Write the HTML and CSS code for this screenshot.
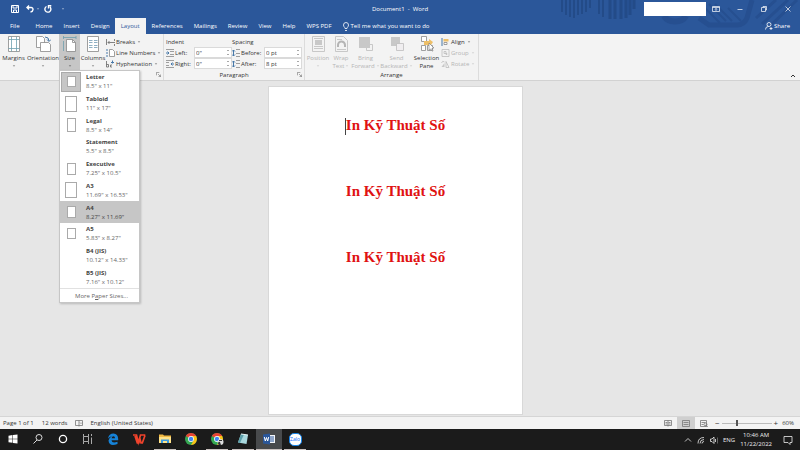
FILE: index.html
```html
<!DOCTYPE html>
<html lang="en">
<head>
<meta charset="utf-8">
<meta name="viewport" content="width=device-width, initial-scale=1">
<title>Document1 - Word</title>
<link rel="stylesheet" href="styles.css">
</head>
<body>
<header class="header">
  <svg class="header-art" viewBox="0 0 240 34" aria-hidden="true">
    <g stroke="#234b88" stroke-width="2">
      <path d="M2 0v12M6 0v15M10 0v17M14 0v18M18 0v15M22 0v14M26 0v12M30 0v8M39 0v14M43 0v17"/>
      <path d="M50 0v19M55 0v19M61 0v19M66 0v18M70 0v15M74 0v9" stroke-width="3"/>
    </g>
    <path d="M104 16a12 9 0 0 0 22 0" fill="none" stroke="#264f90" stroke-width="6"/>
    <path d="M139 18l10 7h28q7 0 10-7l5-18" fill="none" stroke="#264f90" stroke-width="5"/>
    <path d="M143 6l17 17M149 4l17 17M155 4l17 17M168 8l13 13" stroke="#264f90" stroke-width="2"/>
    <path d="M202 24l26-24M208 28l29-28M196 18l20-18" stroke="#264f90" stroke-width="3"/>
  </svg>
  <div class="titlebar">
    <div class="quick">
      <button aria-label="Save"><svg viewBox="0 0 8 8"><path d="M.5.5h7v7h-7zM2 1v2h4V1M2.500 7.500V5h3v2.500" /></svg></button>
      <button aria-label="Undo"><svg viewBox="0 0 8 8"><path class="bold" d="M3 .5L1 2.500 3 4.500M1 2.500h4c3 0 2.500 4-.5 4.500"/></svg></button>
      <i class="caret"></i>
      <button aria-label="Redo"><svg viewBox="0 0 8 8"><path class="bold" d="M6 2a3 3 0 1 1-3.500-.5M4.500 3.500V.700h2.800"/></svg></button>
      <i class="caret"></i>
    </div>
    <h1 class="title">Document1&nbsp; -&nbsp; Word</h1>
    <div class="window">
      <span class="account"></span>
      <button aria-label="Ribbon display options"><svg viewBox="0 0 8 8"><path d="M.5 1.500h7v5h-7zM.5 2.500h7M4 6V3.500M3 4.500l1-1 1 1"/></svg></button>
      <button aria-label="Minimize"><svg viewBox="0 0 8 8"><path d="M1.500 4.500h5"/></svg></button>
      <button aria-label="Restore"><svg viewBox="0 0 8 8"><path d="M1.500 2.500h4v4h-4zM3 2.500v-1h3.500V5h-1"/></svg></button>
      <button aria-label="Close"><svg viewBox="0 0 8 8"><path d="M1.500 1.500l5 5M6.500 1.500l-5 5"/></svg></button>
    </div>
  </div>
  <nav class="tabs">
    <a class="file" href="#">File</a><a href="#">Home</a><a href="#">Insert</a><a href="#">Design</a><a class="active" href="#">Layout</a><a href="#">References</a><a href="#">Mailings</a><a href="#">Review</a><a href="#">View</a><a href="#">Help</a><a href="#">WPS PDF</a>
    <a class="tell" href="#"><svg viewBox="0 0 8 9"><path d="M3 6.500C3 5 1.500 5 1.500 3a2.500 2.500 0 0 1 5 0C6.500 5 5 5 5 6.500zM3 8.500h2"/></svg>Tell me what you want to do</a>
    <a class="share" href="#"><svg viewBox="0 0 8 8"><circle cx="4" cy="2.500" r="2"/><path d="M.5 7.500q0-3 3-3M4.500 6.500h3M6 5v3"/></svg>Share</a>
  </nav>
</header>

<section class="ribbon" aria-label="Layout ribbon">
  <div class="group setup" role="group">
    <div class="tools">
      <button class="big margins"><svg viewBox="0 0 16 16"><path class="paper" d="M2.500.5h11v15h-11z"/><path class="teal" d="M5.500.5v15M10.500.5v15M2.500 3.500h11M2.500 12.500h11"/></svg>Margins<i class="caret"></i></button>
      <button class="big orientation"><svg viewBox="0 0 16 16"><path class="paper" d="M1.500.5h6l2 2v9h-8z"/><path class="paper" d="M5.500 6.500h8l2 2v7h-10z"/><path class="blue" d="M10 1q4 0 4 4M12 3.500l2 2 2-2"/></svg>Orientation<i class="caret"></i></button>
      <div class="size-wrap">
        <button class="big size" aria-expanded="true"><svg viewBox="0 0 16 16"><path class="teal" d="M1 1.500h13M1.500 0v3M14 0v3M1.500 5v10"/><path class="paper" d="M4.500 3.500h6l3 3v9h-9z"/><path class="line" d="M10.500 3.500v3h3"/></svg>Size<i class="caret"></i></button>
        <div class="menu">
          <ul>
            <li><button><span class="thumb chosen"><i class="p8x10"></i></span><span><b>Letter</b>8.5" x 11"</span></button></li>
            <li><button><span class="thumb"><i class="p12x15"></i></span><span><b>Tabloid</b>11" x 17"</span></button></li>
            <li><button><span class="thumb"><i class="p8x13"></i></span><span><b>Legal</b>8.5" x 14"</span></button></li>
            <li><button><span class="thumb"></span><span><b>Statement</b>5.5" x 8.5"</span></button></li>
            <li><button><span class="thumb"><i class="p8x11"></i></span><span><b>Executive</b>7.25" x 10.5"</span></button></li>
            <li><button><span class="thumb"><i class="p12x15"></i></span><span><b>A3</b>11.69" x 16.53"</span></button></li>
            <li><button class="hover"><span class="thumb"><i class="p8x11"></i></span><span><b>A4</b>8.27" x 11.69"</span></button></li>
            <li><button><span class="thumb"><i class="p8x10"></i></span><span><b>A5</b>5.83" x 8.27"</span></button></li>
            <li><button><span class="thumb"></span><span><b>B4 (JIS)</b>10.12" x 14.33"</span></button></li>
            <li><button><span class="thumb"></span><span><b>B5 (JIS)</b>7.16" x 10.12"</span></button></li>
          </ul>
          <button class="more">More P<u>a</u>per Sizes...</button>
        </div>
      </div>
      <button class="big columns"><svg viewBox="0 0 16 16"><path class="paper" d="M2.500.5h11v15h-11z"/><path class="columns-ink" d="M4 4.500h3.500M9 4.500H12.500M4 6.500h3.500M9 6.500H12.500M4 9.500h3.500M9 9.500H12.500M4 11.500h3.500M9 11.500H12.500"/></svg>Columns<i class="caret"></i></button>
      <div class="stack">
        <button><svg viewBox="0 0 9 8"><path class="dark" d="M.5 1v6M2 4.500h7M3.500 3L2 4.500 3.500 6M8.500 1v2M8.500 6v2"/></svg>Breaks<i class="caret"></i></button>
        <button><svg viewBox="0 0 9 8"><path class="blue" d="M1 0v2M1 3v2M1 6v2"/><path class="paper" d="M3.500.5h3l2 2v5h-5z"/></svg>Line Numbers<i class="caret"></i></button>
        <button><svg viewBox="0 0 9 8"><path class="dark" d="M.5 1v6h2V4.500h-2M6 5H4.500v2H6"/><path class="blue" d="M5 2.500h3M6.500.5v3"/></svg>Hyphenation<i class="caret"></i></button>
      </div>
    </div>
    <div class="caption"><svg class="launch" viewBox="0 0 6 6"><path d="M.5 4V.5H4M2.500 2.500l3 3M5.500 3v2.500H3"/></svg></div>
  </div>

  <div class="group paragraph" role="group">
    <div class="tools fields">
      <div class="stack">
        <span class="head">Indent</span>
        <div class="field"><svg viewBox="0 0 8 8"><path class="grey" d="M0 .5h8M4 2.500h4M4 5.500h4M0 7.500h8"/><path class="blue" d="M0 4h3M1.500 2.500L3 4 1.500 5.500"/></svg><label for="left">Left:</label><span class="spin"><input id="left" value='0"'></span></div>
        <div class="field"><svg viewBox="0 0 8 8"><path class="grey" d="M0 .5h8M0 2.500h3M0 5.500h3M0 7.500h8"/><path class="blue" d="M5 4h3M6.500 2.500L5 4l1.500 1.500"/></svg><label for="right">Right:</label><span class="spin"><input id="right" value='0"'></span></div>
      </div>
      <div class="stack">
        <span class="head">Spacing</span>
        <div class="field"><svg viewBox="0 0 8 8"><path class="blue" d="M1.500 1v6M0 2.500L1.500 1 3 2.500M0 5.500L1.500 7 3 5.500"/><path class="grey" d="M4 .5h4M4 4.500h4M4 7.500h4"/></svg><label for="before">Before:</label><span class="spin"><input id="before" value="0 pt"></span></div>
        <div class="field"><svg viewBox="0 0 8 8"><path class="blue" d="M1.500 1v6M0 2.500L1.500 1 3 2.500M0 5.500L1.500 7 3 5.500"/><path class="grey" d="M4 .5h4M4 3.500h4M4 7.500h4"/></svg><label for="after">After:</label><span class="spin"><input id="after" value="8 pt"></span></div>
      </div>
    </div>
    <div class="caption">Paragraph<svg class="launch" viewBox="0 0 6 6"><path d="M.5 4V.5H4M2.500 2.500l3 3M5.500 3v2.500H3"/></svg></div>
  </div>

  <div class="group arrange" role="group">
    <div class="tools">
      <button class="big position" disabled><svg viewBox="0 0 16 16"><path class="mute" d="M2.500.5h12v15h-12zM4 2.500h9M4 12.500h9M4 10.500h9"/><path class="fill" d="M5 4h7v5H5z"/></svg>Position<i class="caret"></i></button>
      <button class="big wrap" disabled><svg viewBox="0 0 16 16"><path class="mute" d="M2.500.5h8l4 4v11h-12zM4 3.500h5M4 13.500h9"/><path class="mutebold" d="M5 11V9a3 3 0 0 1 7 0v2"/></svg>Wrap<span>Text<i class="caret"></i></span></button>
      <button class="big forward" disabled><svg viewBox="0 0 16 16"><path class="mute" d="M8.500 8.500h6v6h-6z"/><path class="fill" d="M1 1h11v11H1z"/></svg>Bring<span>Forward<i class="caret"></i></span></button>
      <button class="big backward" disabled><svg viewBox="0 0 16 16"><path class="fill" d="M2 1h9v9H2z"/><path class="mute solid" d="M7.500 7.500h7v7h-7z"/></svg>Send<span>Backward<i class="caret"></i></span></button>
      <button class="big pane"><svg viewBox="0 0 16 16"><path class="paper" d="M2.500.5h5v5h-5zM8.500 9.500h5v5h-5zM2.500 9.500h4v5h-4z"/><path fill="#edbf68" stroke="none" d="M5 5h5V3l4 3-2 3H5z"/><path d="M10 7l5 5-2 0 1 3-1 0-1-2-2 1z" fill="#fff" stroke="#777" stroke-width=".6"/></svg>Selection<span>Pane</span></button>
      <div class="stack">
        <button><svg viewBox="0 0 8 8"><path class="blue" d="M.5 0v8"/><path fill="#edbf68" stroke="none" d="M2 1h5v2.500H2z"/><path class="paper" d="M2.500 4.500h3v2h-3z"/></svg>Align<i class="caret"></i></button>
        <button disabled><svg viewBox="0 0 8 8"><path class="mute" d="M.5.5h7v7h-7zM2.500 2.500h2v2h-2zM4.500 4.500h1v1h-1z"/></svg>Group<i class="caret"></i></button>
        <button disabled><svg viewBox="0 0 8 8"><path class="mute" d="M0 3q1-3 3-1M4.500 7.500v-6l3 6z"/><path class="fill" d="M0 7l3-4v4z"/></svg>Rotate<i class="caret"></i></button>
      </div>
    </div>
    <div class="caption">Arrange</div>
  </div>
  <button class="collapse" aria-label="Collapse the ribbon"><svg viewBox="0 0 6 6"><path d="M1 4l2-2 2 2"/></svg></button>
</section>

<main class="workspace">
  <article class="sheet">
    <p><span class="cursor"></span>In Kỹ Thuật Số</p>
    <p>In Kỹ Thuật Số</p>
    <p>In Kỹ Thuật Số</p>
  </article>
</main>

<footer class="status">
  <span>Page 1 of 1</span><span>12 words</span>
  <svg class="proof" viewBox="0 0 8 7"><path d="M.5.5h7v5h-7zM4 .5v6M5 2.500l1 1 1-1"/></svg>
  <span>English (United States)</span>
  <div class="views">
    <button aria-label="Read mode"><svg viewBox="0 0 8 7"><path d="M.5.5h7v5h-7zM4 .5v6M1.500 2.500h2M4.500 2.500h2M1.500 4h2M4.500 4h2"/></svg></button>
    <button class="on" aria-label="Print layout"><svg viewBox="0 0 8 7"><path d="M.5.5h7v6h-7zM1.500 2.500h5M1.500 4.500h5"/></svg></button>
    <button aria-label="Web layout"><svg viewBox="0 0 8 7"><path d="M.5.5h6v6h-6zM1.500 2.500h4M1.500 4.500h2"/><circle cx="5.500" cy="4.500" r="1.500"/><path d="M5 5l3 2"/></svg></button>
  </div>
  <div class="zoom"><button>−</button><input type="range" min="0" max="100" value="30" aria-label="Zoom"><button>+</button><span>60%</span></div>
</footer>

<nav class="taskbar" aria-label="Taskbar">
  <div class="apps">
    <button aria-label="Start"><svg viewBox="0 0 14 14"><path fill="#fff" d="M2.500 3.700l4-.6v3.600h-4zM7 3l4.500-.6v4.300H7zM2.500 7.200h4v3.600l-4-.6zM7 7.200h4.500v4.300L7 10.900z"/></svg></button>
    <button aria-label="Search"><svg viewBox="0 0 14 14"><g fill="none" stroke="#ddd"><circle cx="8" cy="5.500" r="3"/><path d="M6 8l-3.500 3.500"/></g></svg></button>
    <button aria-label="Cortana"><svg viewBox="0 0 14 14"><circle cx="7" cy="7" r="3.600" fill="none" stroke="#fff" stroke-width="1.300"/></svg></button>
    <button aria-label="Task view"><svg viewBox="0 0 14 14"><path fill="none" stroke="#aaa" d="M2.500 2v2.500h5V2M2.500 12V9.500h5V12M2.500 4.500v5M7.500 4.500v5M10.500 2v2M10.500 5.500V12"/></svg></button>
    <button class="app" aria-label="Edge"><svg viewBox="0 0 14 14"><path fill="#1683d8" d="M2 6.500Q3 1.500 7.500 1.500 12 1.800 12.200 7v1.200H5.500q.5 3.500 6 1.500V12Q3 15 2.500 8.500 3 5.500 6 4.300 3.500 4.500 2 6.500M5.600 6.200h3.500q-.2-2-1.700-2-1.500 0-1.800 2"/></svg></button>
    <button class="app" aria-label="WPS Office"><svg viewBox="0 0 14 14"><path fill="none" stroke="#f0432c" stroke-width="1.700" d="M1 3h3.500l1.800 7.500L8.500 3h4.800M3 4l2.300 7h1.500L8 7l1 4h1.300L13 3.500"/></svg></button>
    <button class="app open" aria-label="File Explorer"><svg viewBox="0 0 14 14"><path fill="#f1b943" d="M1 2.500h4l1 1h7V11H1z"/><path fill="#ffe28a" d="M1 5h12v6H1z"/><path fill="#3e9be0" d="M3 7.500h8V11H9V9H5v2H3z"/></svg></button>
    <button class="app" aria-label="Chrome"><svg viewBox="0 0 14 14"><circle cx="7" cy="7" r="6" fill="#35a853"/><path fill="#e94335" d="M7 7L1.800 4A6 6 0 0 1 12.200 4z"/><path fill="#fbc116" d="M7 4h5.200A6 6 0 0 1 7 13l2.600-4.500z"/><circle cx="7" cy="7" r="2.900" fill="#fff"/><circle cx="7" cy="7" r="2.200" fill="#4285f4"/></svg></button>
    <button class="app open" aria-label="Chrome profile"><svg viewBox="0 0 14 14"><circle cx="7" cy="7" r="6" fill="#35a853"/><path fill="#e94335" d="M7 7L1.800 4A6 6 0 0 1 12.200 4z"/><path fill="#fbc116" d="M7 4h5.200A6 6 0 0 1 7 13l2.600-4.500z"/><circle cx="7" cy="7" r="2.900" fill="#fff"/><circle cx="7" cy="7" r="2.200" fill="#4285f4"/><circle cx="10.500" cy="10" r="3" fill="#ddd"/><path fill="#333" d="M8 12q0-3 2-2l1 3H9zM9 8h3v1H9z"/></svg></button>
    <button class="app open" aria-label="Notepad"><svg viewBox="0 0 14 14"><path fill="#a9d8de" d="M5 2l7 1-1.500 9L2 10.500z"/><path fill="#5c9fa9" d="M5 2l3 .4L4 11l-2-.5z"/><path fill="#e7f4f5" d="M5 1.500l7 1v1L5 2.500z"/></svg></button>
    <button class="app open current" aria-label="Word"><svg viewBox="0 0 14 14"><path fill="#f3f6fb" d="M7 3h6v8H7z"/><path stroke="#2b579a" d="M8 5h4M8 7h4M8 9h4"/><path fill="#2b579a" d="M1 2.500L8 1.500v11L1 11.500z"/><path fill="none" stroke="#fff" d="M2.300 5l1 4 1.200-3.500L5.700 9l1-4"/></svg></button>
    <button class="app open" aria-label="Zalo"><span class="zalo">Zalo</span></button>
  </div>
  <div class="tray">
    <svg viewBox="0 0 8 8"><path d="M1 5.500l3-3 3 3"/></svg>
    <svg viewBox="0 0 8 8"><path d="M1 7.500Q1 1.500 7 1.500M3 7.500q0-4 4-4M5 7.500q0-2 2-2"/></svg>
    <svg viewBox="0 0 8 8"><path d="M.5 3v2.500H2l2 2V1L2 3zM5.500 3v3"/><path stroke="#777" d="M7.500 1.500v6"/></svg>
    <span>ENG</span>
    <time class="clock">10:46 AM<br>11/22/2022</time>
    <svg class="notice" viewBox="0 0 10 10"><path d="M1 1.500h8v6H7v2l-2-2H1z"/></svg>
  </div>
</nav>
</body>
</html>
```
FILE: styles.css
```css
* { box-sizing: border-box; }

body {
  margin: 0;
  min-height: 100vh;
  display: flex;
  flex-direction: column;
  font: 6px/8px "Open Sans", "Noto Sans", sans-serif;
  color: #333;
  background: #e6e6e6;
}

button, input {
  font: inherit;
  color: inherit;
  border: 0;
  padding: 0;
  margin: 0;
  background: none;
}

a { color: inherit; text-decoration: none; }
svg { display: block; flex: none; fill: none; stroke: currentColor; }

.caret {
  display: inline-block;
  flex: none;
  border: solid transparent;
  border-width: 2px 2px 0;
  border-top-color: currentColor;
  transform: scale(.6);
  opacity: .8;
}

/* Title bar and tabs */
.header { position: relative; background: #2b579a; color: #fff; }
.header-art { position: absolute; top: 0; right: 0; width: 240px; height: 34px; stroke: none; }

.titlebar {
  position: relative;
  display: grid;
  grid-template-columns: 1fr auto 1fr;
  align-items: center;
  height: 18px;
}
.quick { display: flex; align-items: center; gap: 4px; padding-left: 11px; }
.quick button { width: 8px; }
.quick button:nth-of-type(2) { margin: 0 -2px 0 3px; }
.quick .caret:last-child { margin-left: 5px; }
.quick svg { width: 8px; height: 8px; }
.bold { stroke-width: 1.4; }
.title { margin: 0; font-size: 6px; font-weight: 400; }
.window { display: flex; align-items: center; justify-content: flex-end; gap: 16px; padding-right: 8px; }
.window svg { width: 8px; height: 8px; stroke-width: .7; }
.account { width: 62px; height: 14px; margin-right: -10px; background: #fff; }

.tabs { position: relative; display: flex; height: 16px; line-height: 16px; }
.tabs a { padding: 0 5px 0 6px; }
.tabs .file { padding: 0 10px; }
.tabs .active { padding-right: 6px; background: #f3f3f3; color: #2b579a; }
.tabs .tell { display: flex; align-items: center; gap: 1px; padding-left: 5px; }
.tell svg { width: 8px; height: 9px; stroke-width: .8; }
.tabs .share { display: flex; align-items: center; gap: 1px; margin-left: auto; padding-right: 10px; }
.share svg { width: 8px; height: 8px; stroke-width: .8; }

/* Ribbon */
.ribbon { display: flex; height: 47px; background: #f3f3f3; border-bottom: 1px solid #d2d2d2; }
.group { display: flex; flex-direction: column; justify-content: space-between; border-right: 1px solid #dcdcdc; }
.setup { width: 164px; }
.paragraph { width: 141px; }
.arrange { width: 174px; }
.tools { display: flex; }
.big {
  display: flex;
  flex-direction: column;
  align-items: center;
  width: 100%;
  height: 37px;
  padding-top: 2px;
  white-space: nowrap;
}
.big svg { width: 16px; height: 16px; margin-bottom: 2px; }
.big > .caret { margin-top: 3px; }
.big span .caret { margin: 0 0 1px 1px; }
.margins { width: 27px; }
.orientation { width: 32px; }
.size-wrap { position: relative; width: 21px; }
.size { background: #c6c6c6; }
.columns { width: 26px; }
.position { width: 26px; }
.wrap { width: 20px; }
.forward { width: 29px; }
.backward { width: 33px; }
.pane { width: 27px; }
button:disabled { color: #b5b5b5; }

.stack { display: flex; flex-direction: column; padding-top: 2px; white-space: nowrap; }
.stack > * { display: flex; align-items: center; gap: 1px; height: 11px; }
.stack .caret { margin-left: 1px; }
.stack svg { width: 9px; height: 8px; }
.arrange .stack { padding-left: 1px; }

.paper { fill: #fff; stroke: #888; stroke-width: .8; }
.teal { stroke: #6f9fae; stroke-width: .8; }
.blue { stroke: #4778a8; }
.columns-ink { stroke: #8fb0c4; }
.dark { stroke: #666; stroke-width: .8; }
.line { stroke: #888; stroke-width: .8; }
.grey { stroke: #888; stroke-width: .8; }
.mute { stroke: #bcbcbc; stroke-width: .8; }
.mutebold { stroke: #b5b5b5; stroke-width: 2; }
.fill { fill: #c8c8c8; stroke: none; }
.solid { fill: #f0eef0; }

.fields { padding-left: 2px; }
.field svg { width: 8px; height: 8px; }
.field label { width: 18px; }
.stack + .stack label { width: 22px; }
.spin {
  position: relative;
  display: flex;
  align-items: center;
  width: 38px;
  height: 11px;
  background: #fff;
  border: 1px solid #dadada;
}
.spin input { width: 100%; height: 9px; padding-left: 1px; outline: 0; }
.spin::before, .spin::after {
  content: "";
  position: absolute;
  right: 2px;
  border: solid transparent;
  border-width: 0 1px 1px;
  border-bottom-color: #555;
}
.spin::before { top: 2px; }
.spin::after { bottom: 2px; border-width: 1px 1px 0; border-top-color: #555; }

.caption { position: relative; height: 9px; text-align: center; }
.launch { position: absolute; right: 2px; top: 1px; width: 5px; height: 5px; stroke: #777; stroke-width: .8; }
.collapse { align-self: flex-end; margin: 0 4px 1px auto; }
.collapse svg { width: 6px; height: 6px; }

/* Paper size menu */
.menu {
  position: absolute;
  z-index: 2;
  top: 36px;
  left: 0;
  width: 81px;
  background: #fff;
  border: 1px solid #c6c6c6;
  box-shadow: 1px 1px 2px #0003;
  color: #666;
}
.menu ul { display: flex; flex-direction: column; height: 217px; margin: 0; padding: 0; list-style: none; }
.menu li { display: flex; flex: 1; }
.menu li button { display: flex; align-items: center; gap: 5px; width: 100%; padding-left: 1px; text-align: left; }
.menu b { display: block; color: #444; line-height: 9px; }
.menu .hover { background: #c6c6c6; color: #444; }
.thumb { display: flex; align-items: center; justify-content: center; flex: none; width: 20px; height: 20px; }
.chosen { background: #c6c6c6; border: 1px solid #aaa; }
.thumb i { background: #fff; border: 1px solid #aaa; }
.p8x10 { width: 9px; height: 11px; }
.p8x11 { width: 9px; height: 12px; }
.p8x13 { width: 9px; height: 14px; }
.p12x15 { width: 12px; height: 16px; }
.more { display: block; width: 100%; height: 14px; padding-left: 4px; border-top: 1px solid #e1e1e1; }

/* Document */
.workspace { flex: 1; display: flex; justify-content: center; padding: 5px 9px 1px 0; }
.sheet {
  width: 255px;
  padding-top: 27px;
  background: #fff;
  border: 1px solid #d8d8d8;
  text-align: center;
  font: bold 15px/22px "Liberation Serif", serif;
  color: #e01212;
}
.sheet p { margin: 0 0 44px; }
.cursor { display: inline-block; width: 1px; height: 17px; margin-left: -1px; vertical-align: middle; background: #444; }

/* Status bar */
.status { display: flex; align-items: center; height: 13px; padding-left: 3px; background: #f3f3f3; border-top: 1px solid #d5d5d5; }
.status > span { margin-right: 8px; }
.proof { width: 8px; height: 7px; margin-right: 7px; stroke: #777; stroke-width: .8; }
.views { display: flex; margin-left: auto; }
.views button { display: flex; align-items: center; justify-content: center; width: 18px; height: 12px; }
.views .on { background: #cfcfcf; }
.views svg { width: 8px; height: 7px; stroke: #777; stroke-width: .8; }
.zoom { display: flex; align-items: center; gap: 2px; padding: 0 6px 0 2px; }
.zoom button { font-size: 8px; }
.zoom input { width: 50px; height: 8px; appearance: none; background: linear-gradient(#bbb, #bbb) center / 100% 1px no-repeat; }
.zoom input::-webkit-slider-thumb { appearance: none; width: 2px; height: 6px; background: #555; }
.zoom span { margin-left: 2px; }

/* Taskbar */
.taskbar { display: flex; justify-content: space-between; height: 21px; background: #1b1b1b; color: #eee; }
.apps { display: flex; }
.apps button { display: flex; align-items: center; justify-content: center; width: 25px; border-bottom: 1px solid transparent; }
.apps .app { width: 26px; }
.apps svg { width: 14px; height: 14px; stroke: none; }
.apps .open { position: relative; }
.apps .open::after { content: ""; position: absolute; left: 2px; right: 2px; bottom: -1px; height: 1px; background: #c9c1bf; }
.apps .current { background: #484a4c; }
.apps .current::after { left: 0; right: 0; }
.zalo { width: 13px; height: 13px; border: 1px solid #1683e8; border-radius: 5px; background: #fff; color: #0068ff; font-size: 5px; line-height: 11px; text-align: center; }
.tray { display: flex; align-items: center; gap: 5px; padding-right: 7px; }
.tray svg { width: 8px; height: 8px; stroke-width: .8; }
.tray .notice { width: 10px; height: 10px; margin-left: 6px; }
.clock { text-align: center; line-height: 9px; }
```
